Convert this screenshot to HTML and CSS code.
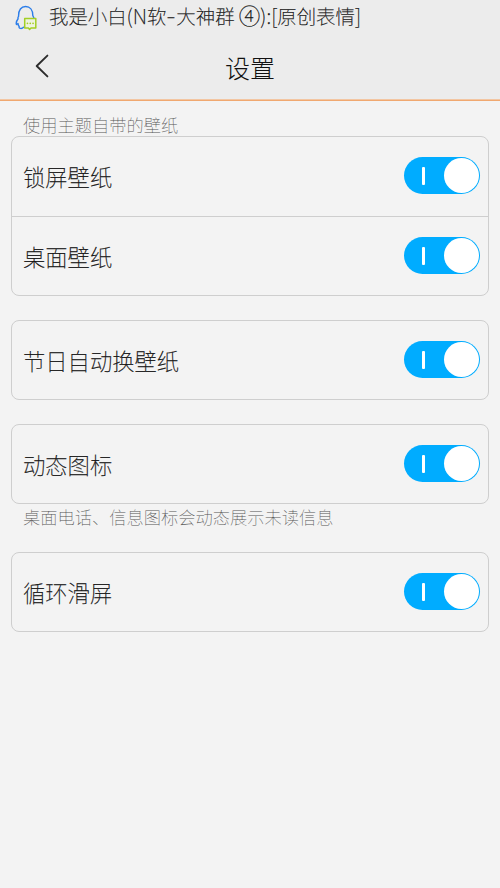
FILE: index.html
```html
<!DOCTYPE html>
<html lang="zh-CN">
<head>
<meta charset="utf-8">
<title>设置</title>
<link rel="stylesheet" href="styles.css">
</head>
<body>
<header class="top">
  <div class="status">
    <svg class="qq" width="24" height="26" viewBox="0 0 24 26" fill="none" stroke-linecap="round" stroke-linejoin="round">
      <path d="M8.5 22.3C7 24 3.3 23.8 4.2 21.4C3.2 20.5 3 19.5 3 18.5L1.5 19.5C.6 17.5 1.8 15.5 3.1 13.8C2.6 12.8 3.2 12 3.6 11.2C3.4 5 6.2 1.5 10.6 1.5C15 1.5 17.8 5 17.8 10.5L18.9 13" stroke="#2b7de9" stroke-width="1.4"/>
      <path d="M9.7 13.6H20.8V23H16L14.6 24.4L13.4 23H9.7Z" stroke="#a3cf25" stroke-width="1.5" fill="#eef3df"/>
      <path d="M12.4 18.4h.1M15.2 18.4h.1M18 18.4h.1" stroke="#a3cf25" stroke-width="1.6"/>
    </svg>
    <span class="notice">我是小白<span class="latin">(N</span>软<span class="dash">-</span>大神群 <span class="num">④</span><span class="latin">):[</span>原创表情<span class="latin">]</span></span>
  </div>
  <div class="nav">
    <svg class="back" width="16" height="26" viewBox="0 0 16 26" fill="none" stroke="#2c2c2c" stroke-width="1.9" stroke-linecap="round" stroke-linejoin="round"><path d="M12.4 2.6L1.7 13L12.4 23.4"/></svg>
    <h1 class="title">设置</h1>
  </div>
</header>
<main class="content">
  <p class="caption above">使用主题自带的壁纸</p>
  <section class="card">
    <div class="row"><span class="label">锁屏壁纸</span><span class="switch"></span></div>
    <div class="row"><span class="label">桌面壁纸</span><span class="switch"></span></div>
  </section>
  <section class="card">
    <div class="row"><span class="label">节日自动换壁纸</span><span class="switch"></span></div>
  </section>
  <section class="card noted">
    <div class="row"><span class="label">动态图标</span><span class="switch"></span></div>
  </section>
  <p class="caption below">桌面电话、信息图标会动态展示未读信息</p>
  <section class="card">
    <div class="row"><span class="label">循环滑屏</span><span class="switch"></span></div>
  </section>
</main>
</body>
</html>
```

FILE: styles.css
```css
* { box-sizing: border-box; }
body {
  margin: 0;
  min-height: 888px;
  background: #f3f3f3;
  color: #111;
  font-family: "Noto Sans CJK SC", sans-serif;
  font-weight: 100;
}
.top {
  height: 101px;
  background: #ececec;
  border-bottom: 1px solid #f0a870;
  box-shadow: 0 -1px 0 #f3c6a2 inset;
}
.status {
  display: flex;
  align-items: center;
  height: 34px;
  padding-left: 15px;
}
.qq { flex: none; margin-top: 1px; }
.notice {
  margin: -3px 0 0 10px;
  font-size: 19.4px;
  line-height: 34px;
  white-space: nowrap;
  -webkit-text-stroke: 0.25px #111;
}
.latin { font-size: 20.5px; }
.dash { display: inline-block; width: 10px; text-align: center; transform: translateY(-1px) scaleX(1.4); }
.num { font-size: 21.5px; }
.nav {
  display: grid;
  grid-template-columns: 100px 1fr 100px;
  align-items: center;
  height: 66px;
}
.status { flex: none; }
.back { margin-left: 35px; margin-top: -2px; }
.title {
  margin: 0;
  text-align: center;
  font-size: 25px;
  line-height: 36px;
  font-weight: 300;
}
.content { padding: 0 11px; }
.caption {
  margin: 0;
  padding-left: 12px;
  color: #555;
  font-size: 17.25px;
  line-height: 24px;
}
.above { height: 35px; padding-top: 12px; }
.below { height: 48px; padding-top: 1px; }
.card {
  margin-bottom: 24px;
  border: 1px solid #cecece;
  border-radius: 8px;
}
.noted { margin-bottom: 0; }
.row {
  display: flex;
  align-items: center;
  justify-content: space-between;
  height: 79px;
  padding: 0 8px 2px 11px;
}
.row + .row { height: 80px; border-top: 1px solid #cecece; }
.label {
  font-size: 22.3px;
  line-height: 32px;
  margin-top: 1px;
  -webkit-text-stroke: 0.25px #111;
}
.card .row:last-child { margin-bottom: -1px; }
.switch {
  display: flex;
  align-items: center;
  justify-content: space-between;
  width: 76px;
  height: 37px;
  padding: 0 1px 0 18px;
  border-radius: 19px;
  background: #00acff;
}
.switch::before {
  content: "";
  width: 3px;
  height: 18px;
  border-radius: 1px;
  background: #fff;
}
.switch::after {
  content: "";
  width: 35px;
  height: 35px;
  border-radius: 50%;
  background: #fff;
}
```
